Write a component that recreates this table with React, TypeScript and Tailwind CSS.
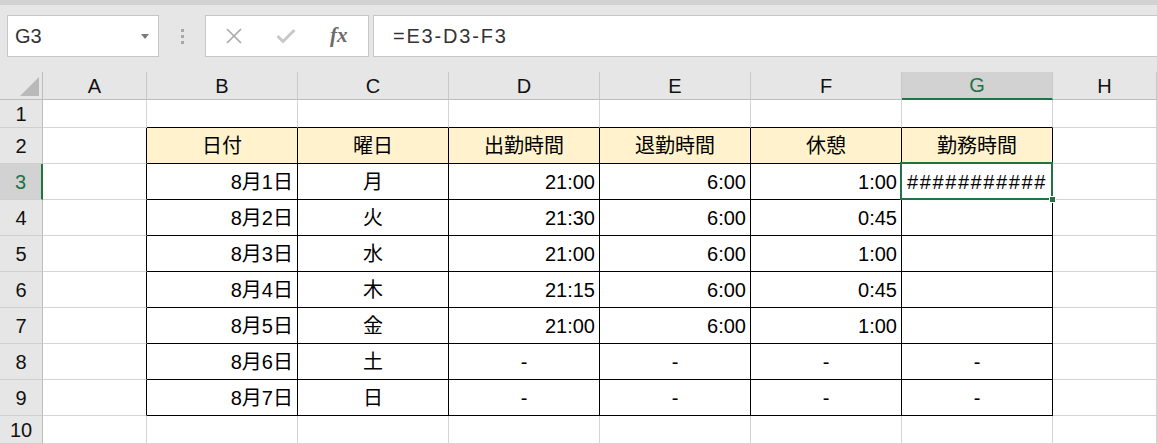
import React from "react";

const COLS = ["A", "B", "C", "D", "E", "F", "G", "H"];

type Cell = { t?: string; align?: "l" | "c" | "r"; };

const headerRow: Cell[] = [
  {},
  { t: "日付", align: "c" },
  { t: "曜日", align: "c" },
  { t: "出勤時間", align: "c" },
  { t: "退勤時間", align: "c" },
  { t: "休憩", align: "c" },
  { t: "勤務時間", align: "c" },
  {},
];

const data: [string, string, string, string, string][] = [
  ["8月1日", "月", "21:00", "6:00", "1:00"],
  ["8月2日", "火", "21:30", "6:00", "0:45"],
  ["8月3日", "水", "21:00", "6:00", "1:00"],
  ["8月4日", "木", "21:15", "6:00", "0:45"],
  ["8月5日", "金", "21:00", "6:00", "1:00"],
  ["8月6日", "土", "-", "-", "-"],
  ["8月7日", "日", "-", "-", "-"],
];

function buildRows(): Cell[][] {
  const rows: Cell[][] = [];
  rows.push(COLS.map(() => ({})));
  rows.push(headerRow);
  data.forEach((d, i) => {
    const dash = d[2] === "-";
    rows.push([
      {},
      { t: d[0], align: "r" },
      { t: d[1], align: "c" },
      { t: d[2], align: dash ? "c" : "r" },
      { t: d[3], align: dash ? "c" : "r" },
      { t: d[4], align: dash ? "c" : "r" },
      dash ? { t: "-", align: "c" } : i === 0 ? { t: "###########", align: "l" } : {},
      {},
    ]);
  });
  rows.push(COLS.map(() => ({})));
  return rows;
}

const rows = buildRows();

function XIcon() {
  return (
    <svg width="18" height="18" viewBox="0 0 18 18">
      <path d="M2 2 L16 16 M16 2 L2 16" stroke="#a8a8a8" strokeWidth="1.6" fill="none" />
    </svg>
  );
}

function CheckIcon() {
  return (
    <svg width="20" height="16" viewBox="0 0 20 16">
      <path d="M1.5 8 L7 13.5 L18.5 2" stroke="#c8c8c8" strokeWidth="3" fill="none" />
    </svg>
  );
}

export default function App() {
  const font = { fontFamily: '"Liberation Sans", "Noto Sans CJK JP", Arial, sans-serif' };
  return (
    <div className="w-[1157px] h-[444px] overflow-hidden bg-white text-black" style={font}>
      <div className="h-[72px] bg-[#e6e6e6] flex flex-col">
        <div className="h-[5px] bg-[#d2d2d2]" />
        <div className="flex items-start pt-[10px] pl-[7px]">
          <div className="w-[152px] h-[42px] bg-white border border-[#c6c6c6] flex items-center justify-between pl-[7px] pr-[9px]">
            <span className="text-[20px] text-[#333]">G3</span>
            <svg width="8" height="5" viewBox="0 0 8 5"><path d="M0 0 L8 0 L4 5 Z" fill="#7a7a7a" /></svg>
          </div>
          <div className="w-[46px] h-[42px] flex flex-col items-center justify-center gap-[3px]">
            <div className="w-[3px] h-[3px] bg-[#a8a8a8]" />
            <div className="w-[3px] h-[3px] bg-[#a8a8a8]" />
            <div className="w-[3px] h-[3px] bg-[#a8a8a8]" />
          </div>
          <div className="w-[164px] h-[42px] bg-white border border-[#c6c6c6] flex items-center pl-[19px]">
            <XIcon />
            <div className="ml-[33px]"><CheckIcon /></div>
            <span
              className="ml-[34px] text-[21px] italic font-bold text-[#6b6b6b]"
              style={{ fontFamily: '"Liberation Serif", "DejaVu Serif", serif' }}
            >
              fx
            </span>
          </div>
          <div className="ml-[4px] flex-1 h-[42px] bg-white border border-[#c6c6c6] border-r-0 flex items-center pl-[19px]">
            <span className="text-[20px] text-[#333] tracking-[1.8px]">=E3-D3-F3</span>
          </div>
        </div>
      </div>

      <div className="grid grid-cols-[43px_104px_151px_151px_151px_151px_151px_151px_1fr] grid-rows-[28px_28px_repeat(8,36px)_28px]">
        <div className="relative bg-[#e6e6e6] border-r border-b border-[#bdbdbd]">
          <svg className="absolute right-[3px] bottom-[3px]" width="19" height="19" viewBox="0 0 19 19">
            <path d="M19 0 L19 19 L0 19 Z" fill="#b9b9b9" />
          </svg>
        </div>
        {COLS.map((c) => {
          const sel = c === "G";
          return (
            <div
              key={c}
              className={
                "flex items-center justify-center text-[20px] border-r border-r-[#c8c8c8] " +
                (sel
                  ? "bg-[#d2d2d2] text-[#217346] border-b-2 border-b-[#217346]"
                  : "bg-[#e6e6e6] text-[#111] border-b border-b-[#bdbdbd]")
              }
            >
              {c}
            </div>
          );
        })}

        {rows.map((row, ri) => {
          const r = ri + 1;
          const selRow = r === 3;
          return (
            <React.Fragment key={r}>
              <div
                className={
                  "flex items-center justify-center text-[20px] border-b border-b-[#cfcfcf] " +
                  (selRow
                    ? "bg-[#d2d2d2] text-[#217346] border-r-2 border-r-[#217346]"
                    : "bg-[#e6e6e6] text-[#111] border-r border-r-[#bdbdbd]")
                }
              >
                {r}
              </div>
              {row.map((cell, ci) => {
                const inTableRow = r >= 2 && r <= 9;
                const rightBlack = inTableRow && ci >= 0 && ci <= 6;
                const bottomBlack = ci >= 1 && ci <= 6 && r >= 1 && r <= 9;
                const isHead = r === 2 && ci >= 1 && ci <= 6;
                const isSel = r === 3 && ci === 6;
                const align =
                  cell.align === "r"
                    ? "justify-end pr-[4px]"
                    : cell.align === "c"
                    ? "justify-center"
                    : "justify-start pl-[5px]";
                return (
                  <div
                    key={ci}
                    className={
                      "relative flex items-center text-[20px] leading-none border-r border-b " +
                      (isSel ? "z-10 " : "") +
                      (rightBlack ? "border-r-black " : "border-r-[#d4d4d4] ") +
                      (bottomBlack ? "border-b-black " : "border-b-[#d4d4d4] ") +
                      (isHead ? "bg-[#fff2cc] " : "bg-white ") +
                      align
                    }
                  >
                    {cell.t && (
                      <span className={"pt-[1px] " + (cell.t.startsWith("#") ? "tracking-[1.6px]" : "")}>
                        {cell.t}
                      </span>
                    )}
                    {isSel && (
                      <>
                        <div className="absolute -left-[2px] -top-[2px] -right-[1px] -bottom-[1px] border-2 border-[#217346] pointer-events-none" />
                        <div className="absolute -right-[4px] -bottom-[4px] w-[7px] h-[7px] bg-[#217346] border border-white" />
                      </>
                    )}
                  </div>
                );
              })}
            </React.Fragment>
          );
        })}
      </div>
    </div>
  );
}
